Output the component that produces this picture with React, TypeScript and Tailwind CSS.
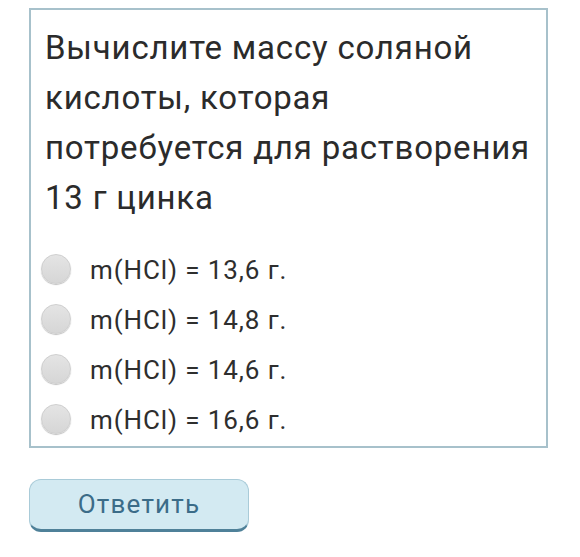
export default function App() {
  const options = ["m(HCl) = 13,6 г.", "m(HCl) = 14,8 г.", "m(HCl) = 14,6 г.", "m(HCl) = 16,6 г."];
  return (
    <div className="min-h-[557px] w-[580px] bg-white pl-[29px] pt-[8px] font-['Roboto',sans-serif]">
      <div className="w-[519px] h-[440px] border-2 border-[#a7c1cb] pl-[14px] pr-[15px] pt-[13px]">
        <p className="text-[33px] leading-[50px] tracking-[0.8px] text-[#2b2b2b]">
          Вычислите массу соляной кислоты, которая потребуется для растворения 13 г цинка
        </p>
        <div className="mt-[22px] flex flex-col">
          {options.map((o) => (
            <label key={o} className="flex h-[50px] items-center">
              <span className="ml-[-4px] mt-[-3px] h-[30px] w-[30px] rounded-full border border-[#cfcfcf] bg-gradient-to-b from-[#e4e4e4] to-[#d6d6d6] shadow-[0_1px_1px_rgba(0,0,0,0.25)]" />
              <span className="ml-[19px] text-[26px] tracking-[0.9px] text-[#2e2e2e]">{o}</span>
            </label>
          ))}
        </div>
      </div>
      <button className="mt-[31px] flex h-[53px] w-[220px] items-center justify-center rounded-[12px] border border-b-[3px] border-[#a9cbd8] border-b-[#4f8199] bg-[#d3eaf2] text-[26px] tracking-[1.2px] text-[#3b6c88]">
        Ответить
      </button>
    </div>
  );
}
